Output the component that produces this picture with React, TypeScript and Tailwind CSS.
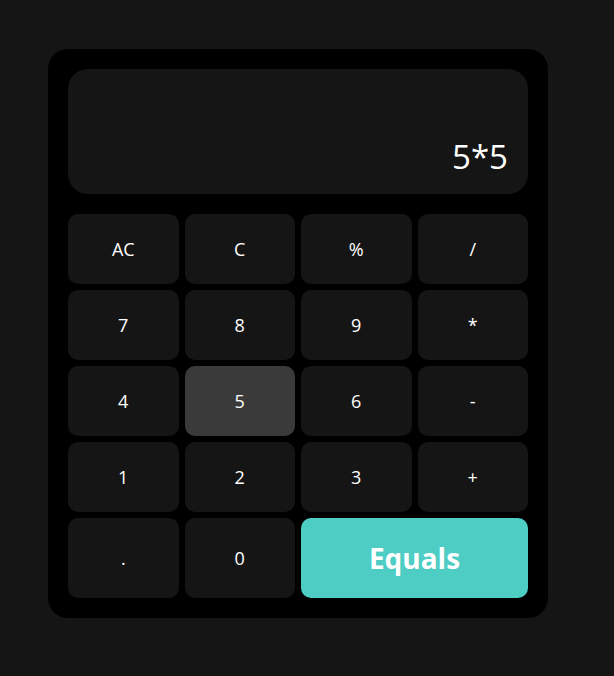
import React from 'react';

const keys = ['AC', 'C', '%', '/', '7', '8', '9', '*', '4', '5', '6', '-', '1', '2', '3', '+'];

export default function App() {
  const expr = '5*5';
  const active = '5';

  return (
    <div className="min-h-[676px] w-full bg-[#151515] pl-[48px] pt-[49px]" style={{ fontFamily: '"Open Sans", "Noto Sans", sans-serif' }}>
      <div className="w-[500px] rounded-[20px] bg-black p-5">
        {/* display */}
        <div className="flex h-[125px] items-end justify-end rounded-[20px] bg-[#151515] px-5 pb-[21px]">
          <span className="text-[33px] leading-none text-white">{expr}</span>
        </div>

        {/* keypad */}
        <div className="mt-5 grid grid-cols-4 gap-[6px]">
          {keys.map((k) => (
            <button
              key={k}
              className={`flex h-[70px] items-center justify-center rounded-[10px] text-[18px] text-white ${
                k === active ? 'bg-[#3a3a3a]' : 'bg-[#151515]'
              }`}
            >
              {k}
            </button>
          ))}
          <button className="flex h-[80px] items-center justify-center rounded-[10px] bg-[#151515] text-[18px] text-white">.</button>
          <button className="flex h-[80px] items-center justify-center rounded-[10px] bg-[#151515] text-[18px] text-white">0</button>
          <button className="col-span-2 flex h-[80px] items-center justify-center rounded-[10px] bg-[#4ecdc4] text-[28px] font-bold text-white">
            Equals
          </button>
        </div>
      </div>
    </div>
  );
}
